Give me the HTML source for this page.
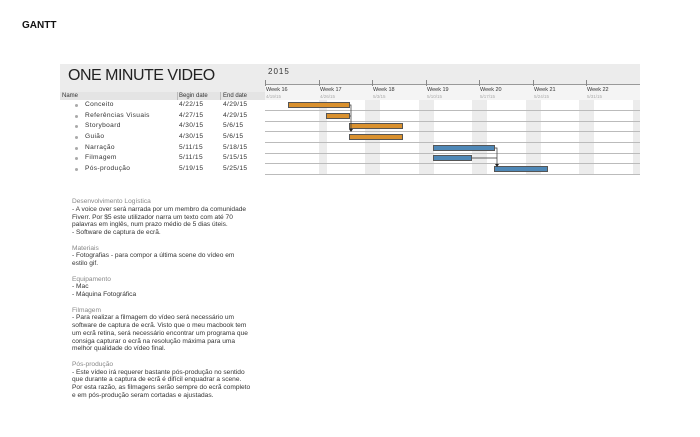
<!DOCTYPE html>
<html><head><meta charset="utf-8"><style>
body{margin:0;width:700px;height:437px;background:#fff;position:relative;overflow:hidden;font-family:"Liberation Sans",sans-serif;color:#333}
.a{position:absolute;white-space:nowrap}
.t{position:absolute;font-size:6px;white-space:nowrap}
.bar{position:absolute;height:6px;border:1px solid #555;box-sizing:border-box}
.o{background:#d9912f}.b{background:#4f88b7}
.row{position:absolute;left:265px;width:375px;height:1px;background:#bbb}
#txt{position:absolute;left:72px;top:198px;font-size:6.6px;line-height:7.75px;color:#333;white-space:nowrap}
#txt .h{color:#888}
.d{position:absolute;width:3px;height:3px;border-radius:50%;background:#aaa}
</style></head><body>
<div class="a" style="left:22px;top:20px;font-size:10px;font-weight:bold;color:#111">GANTT</div>
<div class="a" style="left:60px;top:64px;width:580px;height:20px;background:#ececec"></div>
<div class="a" style="left:60px;top:84px;width:205px;height:8px;background:#ececec"></div>
<div class="a" style="left:60px;top:92px;width:205px;height:8px;background:#e4e4e4"></div>
<div class="a" style="left:265px;top:84px;width:375px;height:16px;background:#f4f4f4"></div>
<div class="a" style="left:265px;top:84px;width:375px;height:1px;background:#999"></div>
<div class="a" style="left:68px;top:67px;font-size:16px;letter-spacing:-0.5px;color:#222">ONE MINUTE VIDEO</div>
<div class="a" style="left:268px;top:67px;font-size:8px;letter-spacing:1px;color:#333">2015</div>
<div class="t" style="left:62px;top:93px">Name</div>
<div class="a" style="left:177px;top:92px;width:1px;height:8px;background:#bbb"></div>
<div class="t" style="left:179px;top:93px">Begin date</div>
<div class="a" style="left:220px;top:92px;width:1px;height:8px;background:#bbb"></div>
<div class="t" style="left:223px;top:93px">End date</div>
<div class="a" style="left:265px;top:100px;width:375px;height:75px">
<div class="a" style="left:54px;width:8px;height:75px;background:#ececec"></div>
<div class="a" style="left:100px;width:15px;height:75px;background:#ececec"></div>
<div class="a" style="left:154px;width:15px;height:75px;background:#ececec"></div>
<div class="a" style="left:207px;width:15px;height:75px;background:#ececec"></div>
<div class="a" style="left:261px;width:15px;height:75px;background:#ececec"></div>
<div class="a" style="left:314px;width:15px;height:75px;background:#ececec"></div>
<div class="a" style="left:368px;width:7px;height:75px;background:#ececec"></div>
</div>
<div class="row" style="top:110px"></div><div class="row" style="top:121px"></div><div class="row" style="top:131px"></div><div class="row" style="top:142px"></div><div class="row" style="top:153px"></div><div class="row" style="top:163px"></div><div class="row" style="top:174px"></div>
<div class="a" style="left:265px;top:80px;width:1px;height:6px;background:#888"></div>
<div class="a" style="left:319px;top:80px;width:1px;height:6px;background:#888"></div>
<div class="a" style="left:372px;top:80px;width:1px;height:6px;background:#888"></div>
<div class="a" style="left:426px;top:80px;width:1px;height:6px;background:#888"></div>
<div class="a" style="left:479px;top:80px;width:1px;height:6px;background:#888"></div>
<div class="a" style="left:533px;top:80px;width:1px;height:6px;background:#888"></div>
<div class="a" style="left:586px;top:80px;width:1px;height:6px;background:#888"></div>
<div class="t" style="left:266px;top:87px;font-size:5.5px">Week 16</div><div class="t" style="left:266px;top:94px;font-size:4.5px;color:#aaa">4/19/15</div>
<div class="t" style="left:320px;top:87px;font-size:5.5px">Week 17</div><div class="t" style="left:320px;top:94px;font-size:4.5px;color:#aaa">4/26/15</div>
<div class="t" style="left:373px;top:87px;font-size:5.5px">Week 18</div><div class="t" style="left:373px;top:94px;font-size:4.5px;color:#aaa">5/3/15</div>
<div class="t" style="left:427px;top:87px;font-size:5.5px">Week 19</div><div class="t" style="left:427px;top:94px;font-size:4.5px;color:#aaa">5/10/15</div>
<div class="t" style="left:480px;top:87px;font-size:5.5px">Week 20</div><div class="t" style="left:480px;top:94px;font-size:4.5px;color:#aaa">5/17/15</div>
<div class="t" style="left:534px;top:87px;font-size:5.5px">Week 21</div><div class="t" style="left:534px;top:94px;font-size:4.5px;color:#aaa">5/24/15</div>
<div class="t" style="left:587px;top:87px;font-size:5.5px">Week 22</div><div class="t" style="left:587px;top:94px;font-size:4.5px;color:#aaa">5/31/15</div>
<div style="position:absolute;left:0;top:0;font-size:6.6px;letter-spacing:0.35px">
<div class="d" style="left:75px;top:104px"></div><div class="a" style="left:85px;top:101px">Conceito</div><div class="a" style="left:179px;top:101px">4/22/15</div><div class="a" style="left:223px;top:101px">4/29/15</div>
<div class="d" style="left:75px;top:115px"></div><div class="a" style="left:85px;top:112px">Referências Visuais</div><div class="a" style="left:179px;top:112px">4/27/15</div><div class="a" style="left:223px;top:112px">4/29/15</div>
<div class="d" style="left:75px;top:125px"></div><div class="a" style="left:85px;top:122px">Storyboard</div><div class="a" style="left:179px;top:122px">4/30/15</div><div class="a" style="left:223px;top:122px">5/6/15</div>
<div class="d" style="left:75px;top:136px"></div><div class="a" style="left:85px;top:133px">Guião</div><div class="a" style="left:179px;top:133px">4/30/15</div><div class="a" style="left:223px;top:133px">5/6/15</div>
<div class="d" style="left:75px;top:147px"></div><div class="a" style="left:85px;top:144px">Narração</div><div class="a" style="left:179px;top:144px">5/11/15</div><div class="a" style="left:223px;top:144px">5/18/15</div>
<div class="d" style="left:75px;top:157px"></div><div class="a" style="left:85px;top:154px">Filmagem</div><div class="a" style="left:179px;top:154px">5/11/15</div><div class="a" style="left:223px;top:154px">5/15/15</div>
<div class="d" style="left:75px;top:168px"></div><div class="a" style="left:85px;top:165px">Pós-produção</div><div class="a" style="left:179px;top:165px">5/19/15</div><div class="a" style="left:223px;top:165px">5/25/15</div>
</div>
<div class="bar o" style="left:288px;top:102px;width:62px"></div>
<div class="bar o" style="left:326px;top:113px;width:24px"></div>
<div class="bar o" style="left:349px;top:123px;width:54px"></div>
<div class="bar o" style="left:349px;top:134px;width:54px"></div>
<div class="bar b" style="left:433px;top:145px;width:62px"></div>
<div class="bar b" style="left:433px;top:155px;width:39px"></div>
<div class="bar b" style="left:494px;top:166px;width:54px"></div>
<svg class="a" style="left:0;top:0" width="700" height="437"><g stroke="#333" stroke-width="0.7" fill="none">
<path d="M350 105H351V131M350 116H351"/><path d="M495 148H497V166M472 158H497"/></g>
<g fill="#222"><path d="M349 129l2 3 2-3z"/><path d="M495 164l2 3 2-3z"/></g></svg>
<div id="txt"><span class="h">Desenvolvimento Logística</span><br>- A voice over será narrada por um membro da comunidade<br>Fiverr. Por $5 este utilizador narra um texto com até 70<br>palavras em inglês, num prazo médio de 5 dias úteis.<br>- Software de captura de ecrã.<br><br><span class="h">Materiais</span><br>- Fotografias - para compor a última scene do vídeo em<br>estilo gif.<br><br><span class="h">Equipamento</span><br>- Mac<br>- Máquina Fotográfica<br><br><span class="h">Filmagem</span><br>- Para realizar a filmagem do vídeo será necessário um<br>software de captura de ecrã. Visto que o meu macbook tem<br>um ecrã retina, será necessário encontrar um programa que<br>consiga capturar o ecrã na resolução máxima para uma<br>melhor qualidade do vídeo final.<br><br><span class="h">Pós-produção</span><br>- Este vídeo irá requerer bastante pós-produção no sentido<br>que durante a captura de ecrã é difícil enquadrar a scene.<br>Por esta razão, as filmagens serão sempre do ecrã completo<br>e em pós-produção seram cortadas e ajustadas.</div>
</body></html>
